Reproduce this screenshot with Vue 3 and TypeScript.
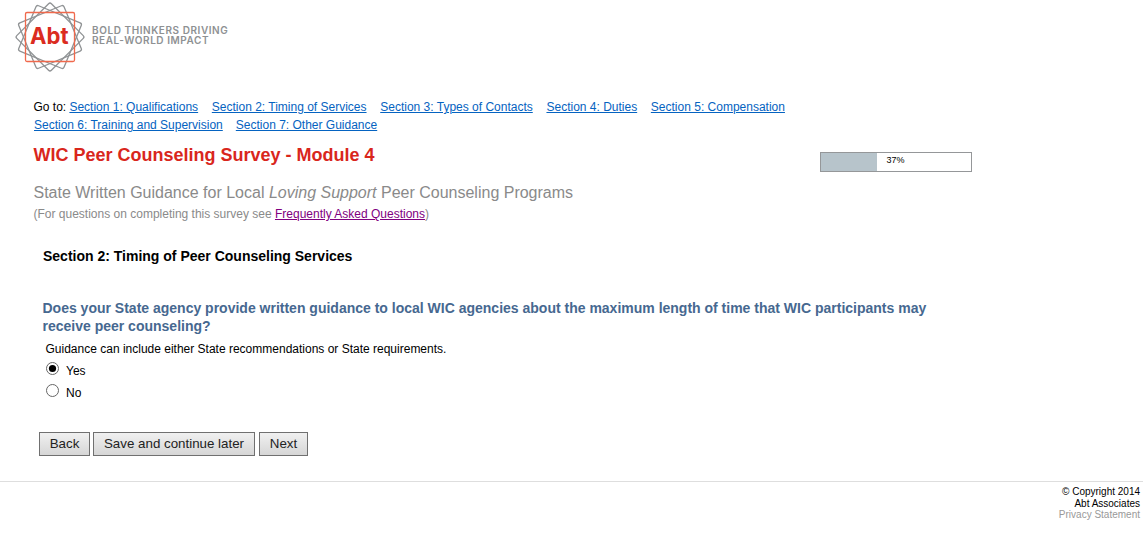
<template>
    <div class="page">
        <header class="brand">
            <svg class="logo" viewBox="0 0 72 72" role="img" aria-label="Abt">
                <g fill="none" stroke-width="1.3">
                    <rect
                        v-for="angle in logoAngles"
                        :key="angle"
                        x="11.5"
                        y="11.5"
                        width="49"
                        height="49"
                        rx="2"
                        stroke="#909395"
                        :transform="`rotate(${angle} 36 36)`"
                    />
                    <rect
                        x="11.5"
                        y="11.5"
                        width="49"
                        height="49"
                        rx="1.5"
                        stroke="#f0694c"
                    />
                </g>
                <text x="16" y="43" textLength="38.5" lengthAdjust="spacingAndGlyphs">Abt</text>
            </svg>
            <div class="tagline">BOLD THINKERS DRIVING<br />REAL-WORLD IMPACT</div>
        </header>

        <main class="content">
            <nav class="sections">
                <div v-for="(row, i) in sectionRows" :key="i" class="section-row">
                    <span v-if="i === 0" class="goto">Go to:</span>
                    <a v-for="section in row" :key="section" href="#">{{ section }}</a>
                </div>
            </nav>

            <div class="title-row">
                <h1>WIC Peer Counseling Survey - Module 4</h1>
                <div class="progress">
                    <div class="progress-fill" :style="{ width: progress + '%' }"></div>
                    <span class="progress-label">{{ progress }}%</span>
                </div>
            </div>

            <h2>
                State Written Guidance for Local <em>Loving Support</em> Peer Counseling Programs
            </h2>
            <p class="faq">
                (For questions on completing this survey see
                <a href="#">Frequently Asked Questions</a>)
            </p>

            <h3>Section 2: Timing of Peer Counseling Services</h3>

            <p class="question">
                Does your State agency provide written guidance to local WIC agencies about the
                maximum length of time that WIC participants may<br />
                receive peer counseling?
            </p>
            <p class="hint">Guidance can include either State recommendations or State requirements.</p>

            <div class="options" role="radiogroup">
                <div
                    v-for="option in options"
                    :key="option"
                    class="option"
                    role="radio"
                    :aria-checked="answer === option"
                    tabindex="0"
                    @click="answer = option"
                    @keydown.space.prevent="answer = option"
                >
                    <svg class="radio" viewBox="0 0 13 13">
                        <circle cx="6.5" cy="6.5" r="6" fill="#fff" stroke="#666" />
                        <circle v-if="answer === option" cx="6.5" cy="6.5" r="3.6" fill="#000" />
                    </svg>
                    <span class="option-label">{{ option }}</span>
                </div>
            </div>

            <div class="buttons">
                <button type="button" class="back">Back</button>
                <button type="button" class="save">Save and continue later</button>
                <button type="button" class="next">Next</button>
            </div>
        </main>

        <footer>
            <div class="copyright">&copy; Copyright 2014</div>
            <div class="company">Abt Associates</div>
            <a href="#">Privacy Statement</a>
        </footer>
    </div>
</template>

<script lang="ts" setup>
import { ref } from "vue";

const logoAngles = [22.5, 45, 67.5];

const sectionRows: string[][] = [
    [
        "Section 1: Qualifications",
        "Section 2: Timing of Services",
        "Section 3: Types of Contacts",
        "Section 4: Duties",
        "Section 5: Compensation",
    ],
    ["Section 6: Training and Supervision", "Section 7: Other Guidance"],
];

const options = ["Yes", "No"];
const answer = ref("Yes");
const progress = 37;
</script>

<style>
body {
    margin: 0;
    background: #fff;
}
</style>

<style scoped>
.page {
    height: 559px;
    overflow: hidden;
    font-family: "Liberation Sans", Arial, sans-serif;
    font-size: 12px;
    color: #000;
}

.brand {
    display: flex;
    height: 98px;
    padding-left: 14px;
    box-sizing: border-box;
}

.logo {
    flex: none;
    width: 72px;
    height: 72px;
    margin-top: 1px;
}

.logo text {
    font-family: Inter, "Liberation Sans", sans-serif;
    font-size: 23px;
    font-weight: bold;
    fill: #db2c20;
}

.tagline {
    padding: 25px 0 0 6px;
    font-family: Inter, sans-serif;
    font-size: 10px;
    font-weight: 600;
    line-height: 10.4px;
    letter-spacing: 0.57px;
    color: #8e9193;
    white-space: nowrap;
}

.content {
    height: 383px;
    padding-left: 33.5px;
}

.section-row {
    display: flex;
    height: 18px;
    line-height: 18px;
    gap: 13px;
}

.section-row:first-child {
    gap: 13.7px;
}

.section-row:last-child {
    padding-left: 0.5px;
}

.goto {
    margin-right: -10.5px;
}

.sections a {
    color: #0563c1;
}

.title-row {
    display: flex;
    height: 46px;
}

h1 {
    width: 786.5px;
    margin: 10px 0 0;
    font-size: 18px;
    line-height: 22px;
    color: #d9261c;
}

.progress {
    display: flex;
    width: 152px;
    height: 20px;
    margin-top: 18px;
    box-sizing: border-box;
    border: 1px solid #959799;
}

.progress-fill {
    background: #b7c4cb;
}

.progress-label {
    margin-left: 10px;
    font-size: 9px;
    line-height: 14px;
}

h2 {
    margin: 3px 0 0;
    font-size: 16px;
    font-weight: normal;
    line-height: 20px;
    color: #8a8a8a;
}

.faq {
    margin: 3px 0 0;
    line-height: 16px;
    color: #8a8a8a;
}

.faq a {
    color: #800080;
}

h3 {
    margin: 25px 0 0 9.5px;
    font-size: 14px;
    line-height: 18px;
}

.question {
    margin: 34px 0 0 9px;
    font-size: 14px;
    font-weight: bold;
    line-height: 18px;
    color: #466890;
    white-space: nowrap;
}

.hint {
    margin: 6px 0 0 12px;
    line-height: 16px;
}

.options {
    padding: 5px 0 0 12.5px;
}

.option {
    display: flex;
    height: 22px;
}

.radio {
    width: 13px;
    height: 13px;
}

.option-label {
    margin-left: 7px;
    line-height: 18px;
}

.buttons {
    display: flex;
    gap: 3px;
    padding: 26px 0 0 5.5px;
}

button {
    height: 24px;
    padding: 0 0 2px;
    border: 1px solid #707070;
    background: linear-gradient(#f0f0f0, #d6d6d6);
    font-family: inherit;
    font-size: 13.33px;
    color: #222;
}

.back {
    width: 51px;
}

.save {
    width: 162px;
    margin-right: 1px;
}

.next {
    width: 49px;
}

footer {
    padding: 4px 3px 0 0;
    border-top: 1px solid #dedede;
    font-size: 10px;
    line-height: 11.5px;
    text-align: right;
}

footer a {
    color: #999;
    text-decoration: none;
}
</style>
